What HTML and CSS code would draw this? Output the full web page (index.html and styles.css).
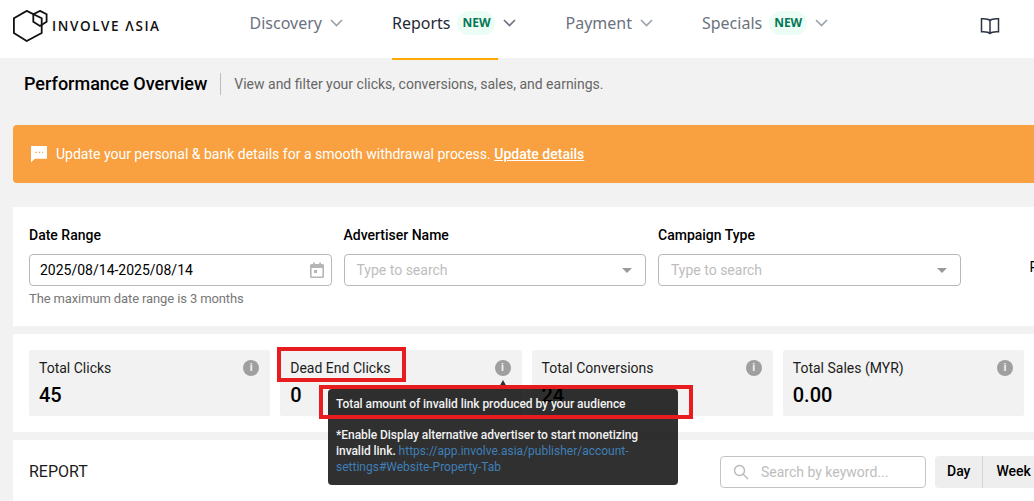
FILE: index.html
```html
<!DOCTYPE html>
<html lang="en">
<head>
<meta charset="utf-8">
<title>Performance Overview</title>
<link rel="stylesheet" href="styles.css">
</head>
<body>
<div class="page">
  <header class="topbar">
    <a class="logo">
      <svg class="logo-mark" width="35" height="32" viewBox="0 0 35 32" fill="none" stroke="#111" stroke-width="1.8">
        <path d="M13.7 .9 28.7 8.2V23L13.7 31 .9 23V8.2Z"/>
        <path d="M27 .9 33.6 4.3V11.7L27 16 20.3 11.7V4.3Z"/>
      </svg>
      <span class="logo-text">INVOLVE ΛSIA</span>
    </a>
    <nav class="nav">
      <div class="nav-item"><span class="nav-tab">Discovery</span><svg class="chev" width="13" height="8" viewBox="0 0 13 8"><path d="M1 1 6.5 6.5 12 1"/></svg></div>
      <div class="nav-item active"><span class="nav-tab">Reports<span class="badge">NEW</span></span><svg class="chev" width="13" height="8" viewBox="0 0 13 8"><path d="M1 1 6.5 6.5 12 1"/></svg></div>
      <div class="nav-item"><span class="nav-tab">Payment</span><svg class="chev" width="13" height="8" viewBox="0 0 13 8"><path d="M1 1 6.5 6.5 12 1"/></svg></div>
      <div class="nav-item"><span class="nav-tab">Specials<span class="badge">NEW</span></span><svg class="chev" width="13" height="8" viewBox="0 0 13 8"><path d="M1 1 6.5 6.5 12 1"/></svg></div>
    </nav>
    <svg class="book" width="20" height="18" viewBox="0 0 20 18" fill="none" stroke="#2c3445" stroke-width="1.5">
      <path d="M10 3.5C8.5 2 6 1.5 1.5 1.8V14.8C6 14.5 8.5 15 10 16.5 11.5 15 14 14.5 18.5 14.8V1.8C14 1.5 11.5 2 10 3.5ZM10 3.5V16.5"/>
    </svg>
  </header>

  <main class="content">
    <div class="title-row">
      <h1 class="title">Performance Overview</h1>
      <p class="subtitle">View and filter your clicks, conversions, sales, and earnings.</p>
    </div>

    <div class="banner">
      <svg width="18" height="18" viewBox="0 0 18 18"><path fill="#fff" d="M1.5 1H16.5A.8.8 0 0 1 17 1.8V13A.8.8 0 0 1 16.5 13.7H5L1 17.2V1.8A.8.8 0 0 1 1.5 1Z"/><path stroke="#f9a040" stroke-width="1.4" stroke-dasharray="1.4 2" d="M5.4 7.4H13"/></svg>
      <span>Update your personal &amp; bank details for a smooth withdrawal process. <a class="banner-link">Update details</a></span>
    </div>

    <section class="card filters">
      <div class="field">
        <label class="field-label">Date Range</label>
        <div class="input">
          <span class="input-value">2025/08/14-2025/08/14</span>
          <svg width="14" height="16" viewBox="0 0 14 16"><path fill="#b5b5b5" d="M1.5 2H3V.5H4.8V2H9.2V.5H11V2H12.5A1.5 1.5 0 0 1 14 3.5V14.5A1.5 1.5 0 0 1 12.5 16H1.5A1.5 1.5 0 0 1 0 14.5V3.5A1.5 1.5 0 0 1 1.5 2ZM1.6 6V14.4H12.4V6ZM4 8H7V11H4Z" fill-rule="evenodd"/></svg>
        </div>
        <p class="hint">The maximum date range is 3 months</p>
      </div>
      <div class="field">
        <label class="field-label">Advertiser Name</label>
        <div class="input">
          <span class="placeholder">Type to search</span>
          <span class="caret"></span>
        </div>
      </div>
      <div class="field">
        <label class="field-label">Campaign Type</label>
        <div class="input">
          <span class="placeholder">Type to search</span>
          <span class="caret"></span>
        </div>
      </div>
      <div class="field field-cut"><span class="cut-text">P</span></div>
    </section>

    <section class="card stats">
      <div class="stat"><div class="stat-head"><span>Total Clicks</span><span class="info">i</span></div><div class="stat-value">45</div></div>
      <div class="stat"><div class="stat-head"><span>Dead End Clicks</span><span class="info">i</span></div><div class="stat-value">0</div></div>
      <div class="stat"><div class="stat-head"><span>Total Conversions</span><span class="info">i</span></div><div class="stat-value">24</div></div>
      <div class="stat"><div class="stat-head"><span>Total Sales (MYR)</span><span class="info">i</span></div><div class="stat-value">0.00</div></div>
    </section>

    <section class="card report">
      <h2 class="report-title">REPORT</h2>
      <div class="search">
        <svg width="16" height="16" viewBox="0 0 16 16" fill="none" stroke="#b9b9b9" stroke-width="1.4"><circle cx="6.5" cy="6.5" r="5"/><path d="M10.2 10.2 15 15"/></svg>
        <span class="placeholder">Search by keyword...</span>
      </div>
      <div class="segments"><span class="segment">Day</span><span class="segment">Week</span></div>
    </section>
  </main>

  <div class="tooltip">
    <p class="tip-main">Total amount of invalid link produced by your audience</p>
    <p class="tip-note">*Enable Display alternative advertiser to start monetizing invalid link. <a class="tip-link">https://app.involve.asia/publisher/account-settings#Website-Property-Tab</a></p>
  </div>
  <div class="tip-arrow"></div>
  <div class="mark mark-label"></div>
  <div class="mark mark-tip"></div>
</div>
</body>
</html>
```
FILE: styles.css
```css
* { box-sizing: border-box; }
html, body { margin: 0; padding: 0; }
body { font-family: Roboto, "Liberation Sans", sans-serif; background: #f2f2f2; color: #000; }
p, h1, h2 { margin: 0; }

.page { position: relative; width: 1034px; height: 501px; overflow: hidden; background: #f2f2f2; }

.topbar { display: flex; align-items: flex-start; height: 58px; background: #fff; padding-left: 13px; }
.logo { display: flex; align-items: flex-start; width: 236.5px; flex: none; padding-top: 10px; }
.logo-mark { flex: none; }
.logo-text { font-family: "Open Sans", sans-serif; font-weight: 600; font-size: 13.5px; letter-spacing: 1.6px; color: #111; line-height: 16px; margin: 8px 0 0 4px; white-space: nowrap; }

.nav { display: flex; gap: 49px; flex: none; }
.nav-item { display: flex; align-items: flex-start; gap: 5px; font-family: "Noto Sans", sans-serif; font-size: 16px; color: #6b7280; height: 60px; }
.nav-item.active { color: #1f2937; }
.nav-tab { display: flex; align-items: flex-start; height: 60px; padding: 11px 3px 0 0; line-height: 24px; border-bottom: 2px solid transparent; }
.active .nav-tab { border-bottom-color: #ffa800; }
.chev { margin-top: 19px; fill: none; stroke: #9ca3af; stroke-width: 1.7; }
.active .chev { stroke: #6b7280; }
.badge { display: inline-block; width: 38px; text-align: center; font-size: 12px; font-weight: 700; color: #047857; background: #ecfdf5; border-radius: 12px; height: 24px; line-height: 24px; margin-left: 7px; }
.book { position: absolute; left: 980px; top: 17px; }

.content { display: block; padding: 0 0 0 13px; width: 1060px; }
.title-row { display: flex; align-items: center; height: 52px; margin-bottom: 15px; padding-left: 11px; }
.title { font-size: 18px; font-weight: 500; line-height: 22px; padding-right: 13px; border-right: 1px solid #bdbdbd; white-space: nowrap; }
.subtitle { font-size: 14px; color: #666; padding-left: 13px; white-space: nowrap; }

.banner { display: flex; align-items: center; gap: 8px; width: 1047px; height: 58px; border-radius: 4px; margin-bottom: 24px; padding-left: 17px; background: #f9a040; color: #fff; font-size: 14px; }
.banner-link { font-weight: 500; text-decoration: underline; }

.card { background: #fff; width: 1047px; }
.filters { display: grid; grid-template-columns: repeat(4, 302.5px); column-gap: 12px; height: 119px; padding: 19px 0 0 16px; margin-bottom: 8px; overflow: hidden; }
.field-label { display: block; font-size: 14px; font-weight: 500; line-height: 18px; margin-bottom: 10px; }
.input { display: flex; align-items: center; justify-content: space-between; height: 32px; border: 1px solid #b8b8b8; border-radius: 4px; padding: 0 7px 0 10px; background: #fff; font-size: 14px; }
.placeholder { color: #bdbdbd; font-size: 14px; padding-left: 2px; }
.caret { width: 0; height: 0; border-left: 5px solid transparent; border-right: 5px solid transparent; border-top: 5px solid #9a9a9a; margin-right: 6px; }
.hint { font-size: 13px; letter-spacing: -.12px; color: #777; line-height: 16px; margin-top: 5px; }
.field-cut { padding: 32px 0 0 57px; font-size: 14px; line-height: 18px; }
.cut-text { display: block; }

.stats { display: grid; grid-template-columns: repeat(4, 241.25px); gap: 10px; height: 98px; padding: 16px 0 0 16px; margin-bottom: 8px; }
.stat { height: 66px; background: #f2f2f2; border-radius: 2px; padding: 9px 11px 0 10px; }
.stat-head { display: flex; justify-content: space-between; align-items: center; font-size: 14px; line-height: 18px; color: #1c1c1c; }
.info { display: flex; align-items: center; justify-content: center; width: 16px; height: 16px; border-radius: 50%; background: #9f9f9f; color: #f2f2f2; font-size: 11px; font-weight: 700; }
.stat-value { font-size: 20px; font-weight: 500; line-height: 26px; margin-top: 5px; }

.report { display: flex; align-items: flex-start; height: 80px; padding: 16px 0 0 16px; }
.report-title { font-size: 16px; font-weight: 400; line-height: 32px; width: 691px; color: #1c1c1c; }
.search { display: flex; align-items: center; gap: 9px; width: 206px; height: 32px; padding-left: 12px; border: 1px solid #c4c4c4; border-radius: 4px; background: #fff; margin-right: 9px; }
.search .placeholder { padding-left: 3px; }
.segments { display: flex; background: #eee; border-radius: 4px; height: 32px; }
.segment { font-size: 14px; font-weight: 500; line-height: 30px; padding: 0 12px; border-right: 1px solid #d6d6d6; }
.segment:last-child { border-right: 0; padding-left: 13px; }

.tooltip { position: absolute; left: 328px; top: 389px; width: 350px; height: 96px; padding: 6px 8px; background: rgba(0,0,0,.81); border-radius: 4px; color: #f2f2f2; font-size: 12px; font-weight: 500; line-height: 16px; letter-spacing: -.05px; }
.tip-main { padding-top: 1px; }
.tip-note { margin-top: 15px; }
.tip-link { color: #3f7fb8; font-weight: 400; letter-spacing: 0; }
.tip-arrow { position: absolute; left: 498px; top: 380px; width: 0; height: 0; border-left: 5.5px solid transparent; border-right: 5.5px solid transparent; border-bottom: 9px solid #303030; }
.mark { position: absolute; border: 4px solid #e81c1f; }
.mark-label { left: 277px; top: 347px; width: 129px; height: 35px; }
.mark-tip { left: 319px; top: 385px; width: 374px; height: 34px; }
```
